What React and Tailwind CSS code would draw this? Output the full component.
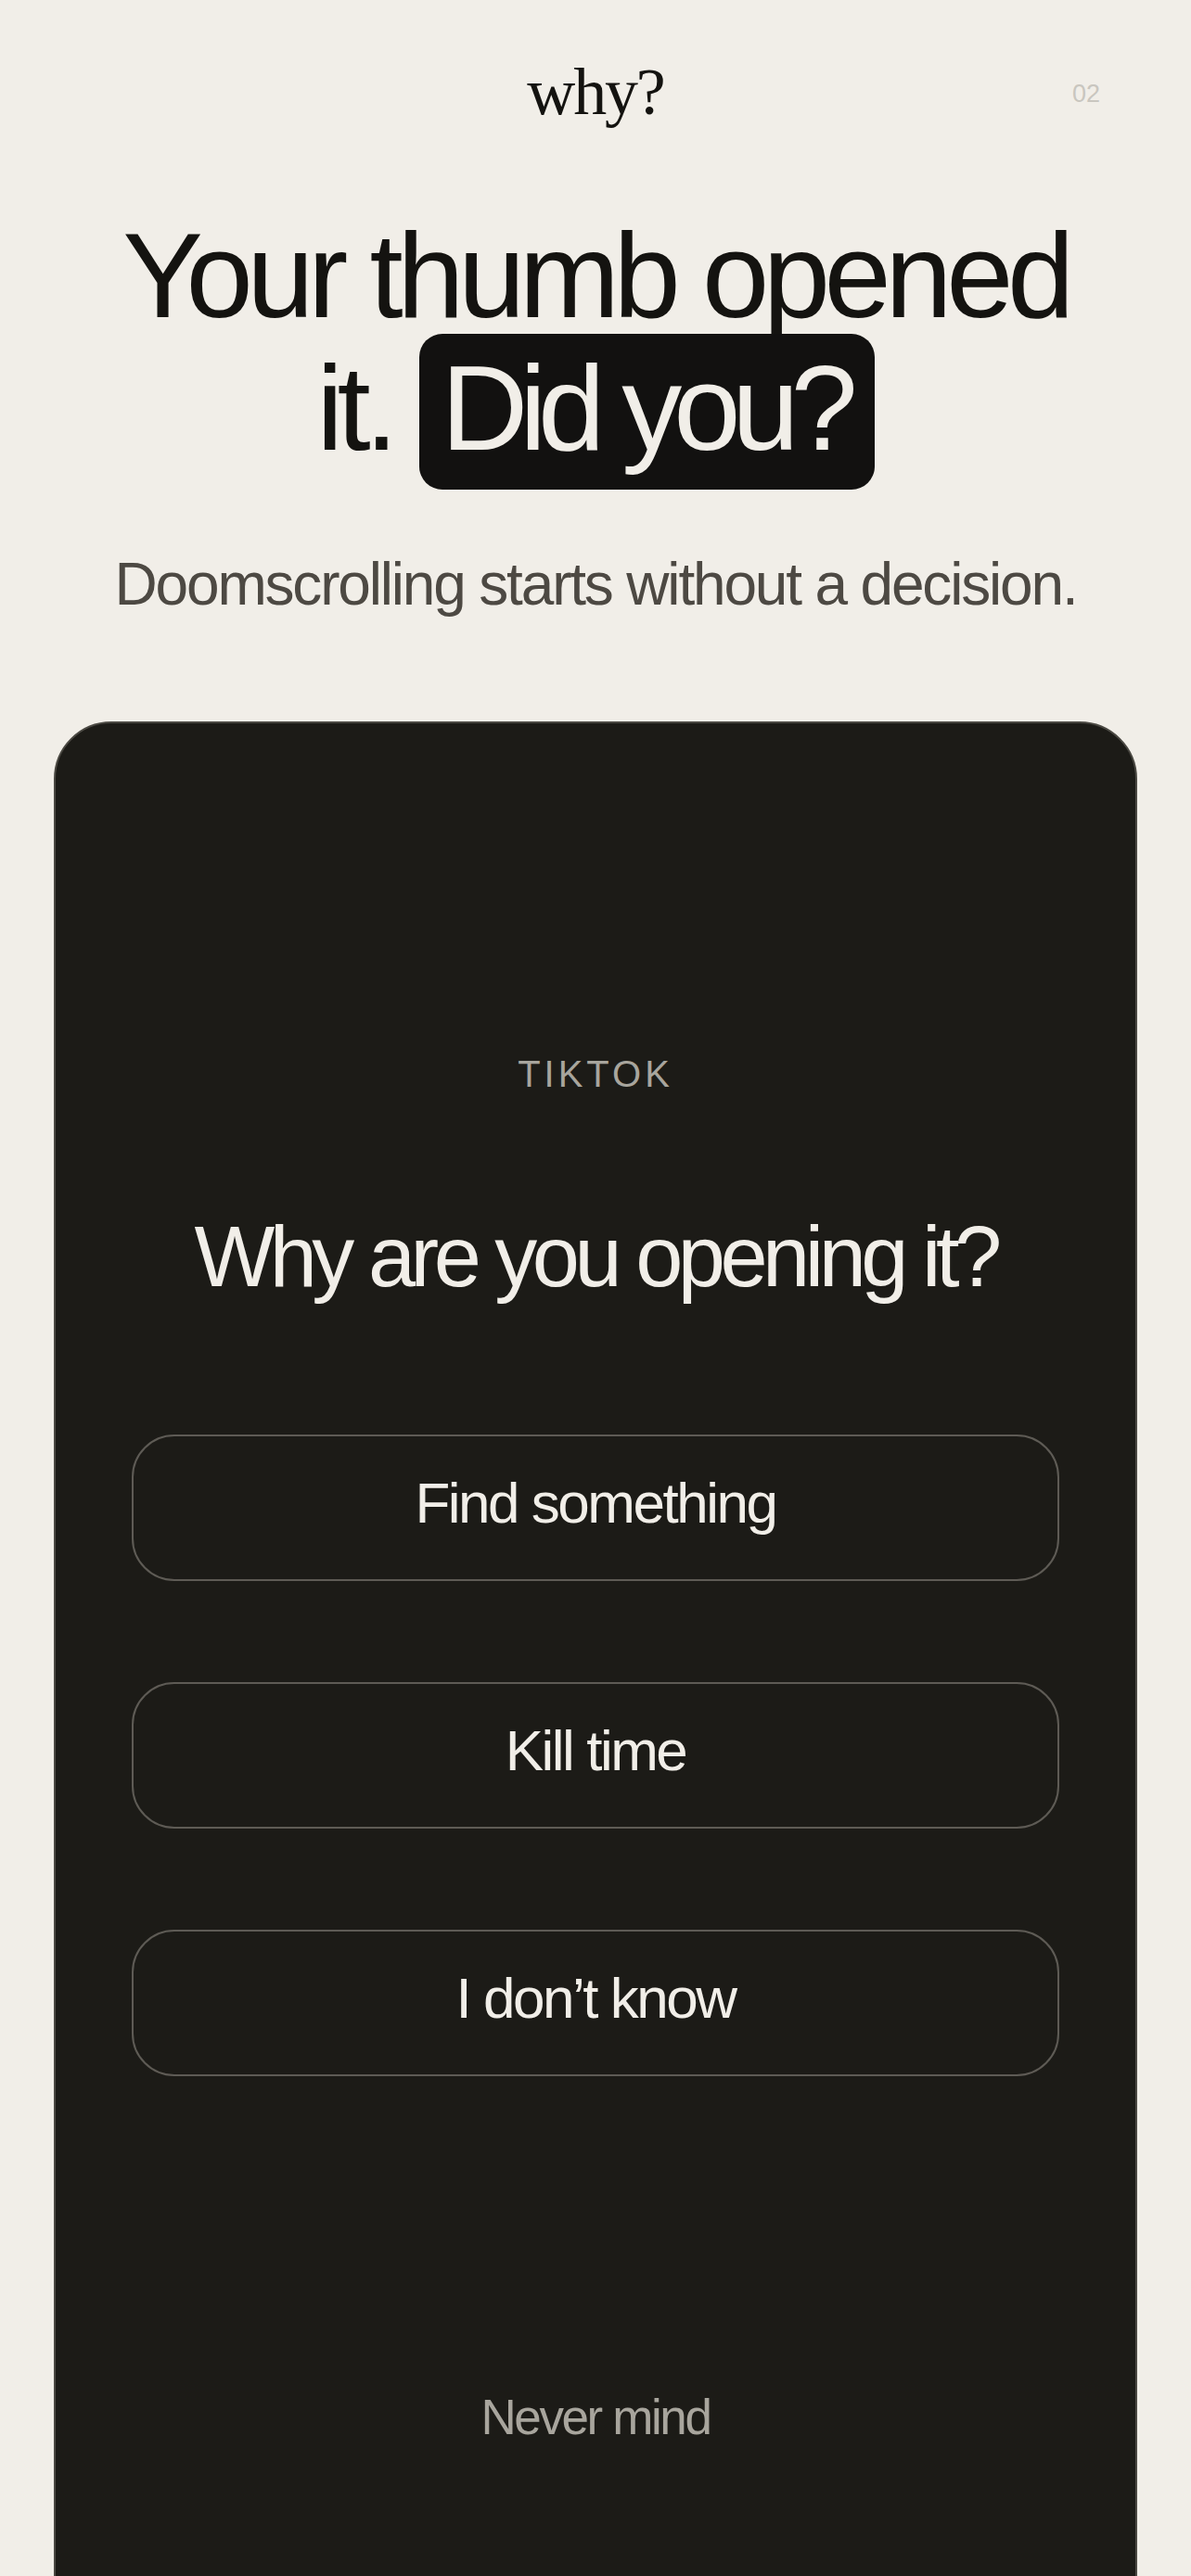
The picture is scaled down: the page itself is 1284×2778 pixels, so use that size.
export default function App() {
  const options = ['Find something', 'Kill time', 'I don’t know'];

  return (
    <div className="min-h-screen bg-[#f1eee8] font-['Liberation_Sans',Arial,sans-serif] text-[#141310] overflow-hidden">
      <header className="grid grid-cols-[1fr_auto_1fr] items-center pt-[59px] px-[98px]">
        <div />
        <div className="font-['Liberation_Serif',serif] text-[72px] leading-[80px] tracking-[-0.03em] text-[#141310]">
          why?
        </div>
        <div className="text-right text-[27px] leading-[30px] mt-[4px] text-[#c9c6bf]">02</div>
      </header>

      <h1 className="mt-[87px] text-center text-[130px] leading-[143px] tracking-[-0.05em] font-normal">
        Your thumb opened
        <br />
        it.{' '}
        <span className="bg-[#121110] text-[#f1eee8] rounded-[25px] pt-[7px] pb-[15px] pl-[23px] pr-[27px] tracking-[-0.07em]">
          Did you?
        </span>
      </h1>

      <p className="mt-[80px] text-center text-[64px] leading-[77px] tracking-[-0.034em] text-[#4d4943]">
        Doomscrolling starts without a decision.
      </p>

      <section className="mt-[109px] mx-[58px] bg-[#1c1b17] border-2 border-[#4a4842] rounded-[62px] pt-[356px] pb-[300px] px-[82px]">
        <div className="text-center text-[40px] leading-[44px] tracking-[0.1em] text-[#a8a59d]">TIKTOK</div>

        <h2 className="mt-[121px] text-center text-[92px] leading-[108px] tracking-[-0.06em] text-[#f1eee8] font-normal">
          Why are you opening it?
        </h2>

        <div className="mt-[138px] flex flex-col gap-[109px]">
          {options.map((label) => (
            <button
              key={label}
              className="h-[158px] w-full rounded-[46px] border-2 border-[#5e5b55] flex items-center justify-center pb-[11px] text-[62px] tracking-[-0.04em] text-[#f1eee8]"
            >
              {label}
            </button>
          ))}
        </div>

        <div className="mt-[336px] text-center text-[53px] leading-[63px] tracking-[-0.045em] text-[#a8a59d]">
          Never mind
        </div>
      </section>
    </div>
  );
}
